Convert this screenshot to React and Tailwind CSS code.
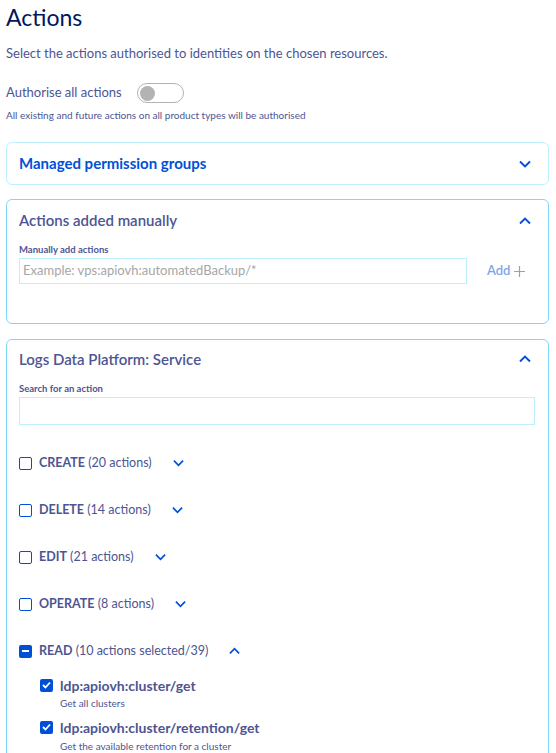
import React from "react";

const Chevron = ({ up = false, className = "", w = 12 }) => (
  <svg width={w} height="8" viewBox="0 0 12 8" className={className}>
    <path
      d={up ? "M1 6.5 L6 1.5 L11 6.5" : "M1 1.5 L6 6.5 L11 1.5"}
      fill="none"
      stroke="#0050d7"
      strokeWidth="1.9"
    />
  </svg>
);

const Box = ({ state = "empty" }) => {
  if (state === "empty")
    return <span className="inline-block w-[13px] h-[13px] border-[1.5px] border-[#0050d7] rounded-[2px] bg-white shrink-0" />;
  return (
    <span className="inline-flex items-center justify-center w-[13px] h-[13px] rounded-[2px] bg-[#0050d7] shrink-0">
      {state === "minus" ? (
        <span className="block w-[7px] h-[2px] bg-white" />
      ) : (
        <svg width="9" height="8" viewBox="0 0 9 8">
          <path d="M1 4 L3.5 6.5 L8 1.5" fill="none" stroke="white" strokeWidth="1.8" />
        </svg>
      )}
    </span>
  );
};

const GroupRow = ({ name, count, up, state = "empty" }) => (
  <div className="flex items-center h-[20px]">
    <Box state={state} />
    <span className="ml-[7px] text-[12.5px] text-[#4d5592]">
      <span className="font-bold">{name}</span> {count}
    </span>
    <Chevron up={up} className="ml-[21px]" w={11} />
  </div>
);

export default function App() {
  return (
    <div className="w-[556px] h-[753px] overflow-hidden bg-white text-[#4d5592]" style={{ fontFamily: "'Source Sans Pro', Lato, 'Noto Sans', sans-serif" }}>
      <div className="pl-[6px] pr-[7px] pt-[1px]">
        <h1 className="text-[23px] leading-[32px] text-[#00185e] font-normal">Actions</h1>
        <p className="mt-[11px] text-[13px] leading-[18px]">Select the actions authorised to identities on the chosen resources.</p>
        <div className="mt-[21px] flex items-center h-[20px]">
          <span className="text-[13px]">Authorise all actions</span>
          <span className="ml-[15px] w-[47px] h-[20px] rounded-full border border-[#b3b3b3] bg-white flex items-center pl-[2px]">
            <span className="w-[15px] h-[15px] rounded-full bg-[#b3b3b3]" />
          </span>
        </div>
        <p className="mt-[6px] text-[10px] leading-[12px]">All existing and future actions on all product types will be authorised</p>

        <div className="mt-[21px] h-[43px] border border-[#bef1ff] rounded-[6px] flex items-center justify-between pl-[12px] pr-[17px]">
          <span className="text-[15px] font-bold text-[#0050d7]">Managed permission groups</span>
          <Chevron />
        </div>

        <div className="mt-[14px] h-[125px] border border-[#7fd8fa] rounded-[6px] pl-[12px] pr-[17px]">
          <div className="h-[41px] flex items-center justify-between">
            <span className="text-[15px] font-semibold">Actions added manually</span>
            <Chevron up />
          </div>
          <div className="text-[9.5px] font-bold leading-[12px] mt-[3px]">Manually add actions</div>
          <div className="flex items-center mt-[2px]">
            <div className="w-[448px] h-[26px] border border-[#bef1ff] flex items-center px-[3px] text-[13px] text-[#a6a6a6]">Example: vps:apiovh:automatedBackup/*</div>
            <span className="ml-[20px] text-[13px] font-semibold text-[#7fa3ea] flex items-center gap-[4px]">
              Add
              <svg width="11" height="11" viewBox="0 0 11 11"><path d="M5.5 0 V11 M0 5.5 H11" stroke="#7fa3ea" strokeWidth="1.2" /></svg>
            </span>
          </div>
        </div>

        <div className="mt-[15px] h-[420px] border border-[#7fd8fa] rounded-[6px] pl-[12px] pr-[13px]">
          <div className="h-[38px] flex items-center justify-between pr-[4px]">
            <span className="text-[15px] font-semibold">Logs Data Platform: Service</span>
            <Chevron up />
          </div>
          <div className="text-[9.5px] font-bold leading-[12px] mt-[5px]">Search for an action</div>
          <div className="h-[28px] border border-[#bef1ff] mt-[2px]" />
          <div className="mt-[28px] flex flex-col gap-[27px]">
            <GroupRow name="CREATE" count="(20 actions)" />
            <GroupRow name="DELETE" count="(14 actions)" />
            <GroupRow name="EDIT" count="(21 actions)" />
            <GroupRow name="OPERATE" count="(8 actions)" />
            <GroupRow name="READ" count="(10 actions selected/39)" up state="minus" />
          </div>
          <div className="pl-[21px] mt-[14px]">
            <div className="flex items-center h-[20px]">
              <Box state="check" />
              <span className="ml-[7px] text-[14px] font-bold">ldp:apiovh:cluster/get</span>
            </div>
            <div className="pl-[20px] text-[10px] leading-[12px] mt-[2px]">Get all clusters</div>
            <div className="flex items-center h-[20px] mt-[8px]">
              <Box state="check" />
              <span className="ml-[7px] text-[14px] font-bold">ldp:apiovh:cluster/retention/get</span>
            </div>
            <div className="pl-[20px] text-[10px] leading-[12px] mt-[3px]">Get the available retention for a cluster</div>
          </div>
        </div>
      </div>
    </div>
  );
}
